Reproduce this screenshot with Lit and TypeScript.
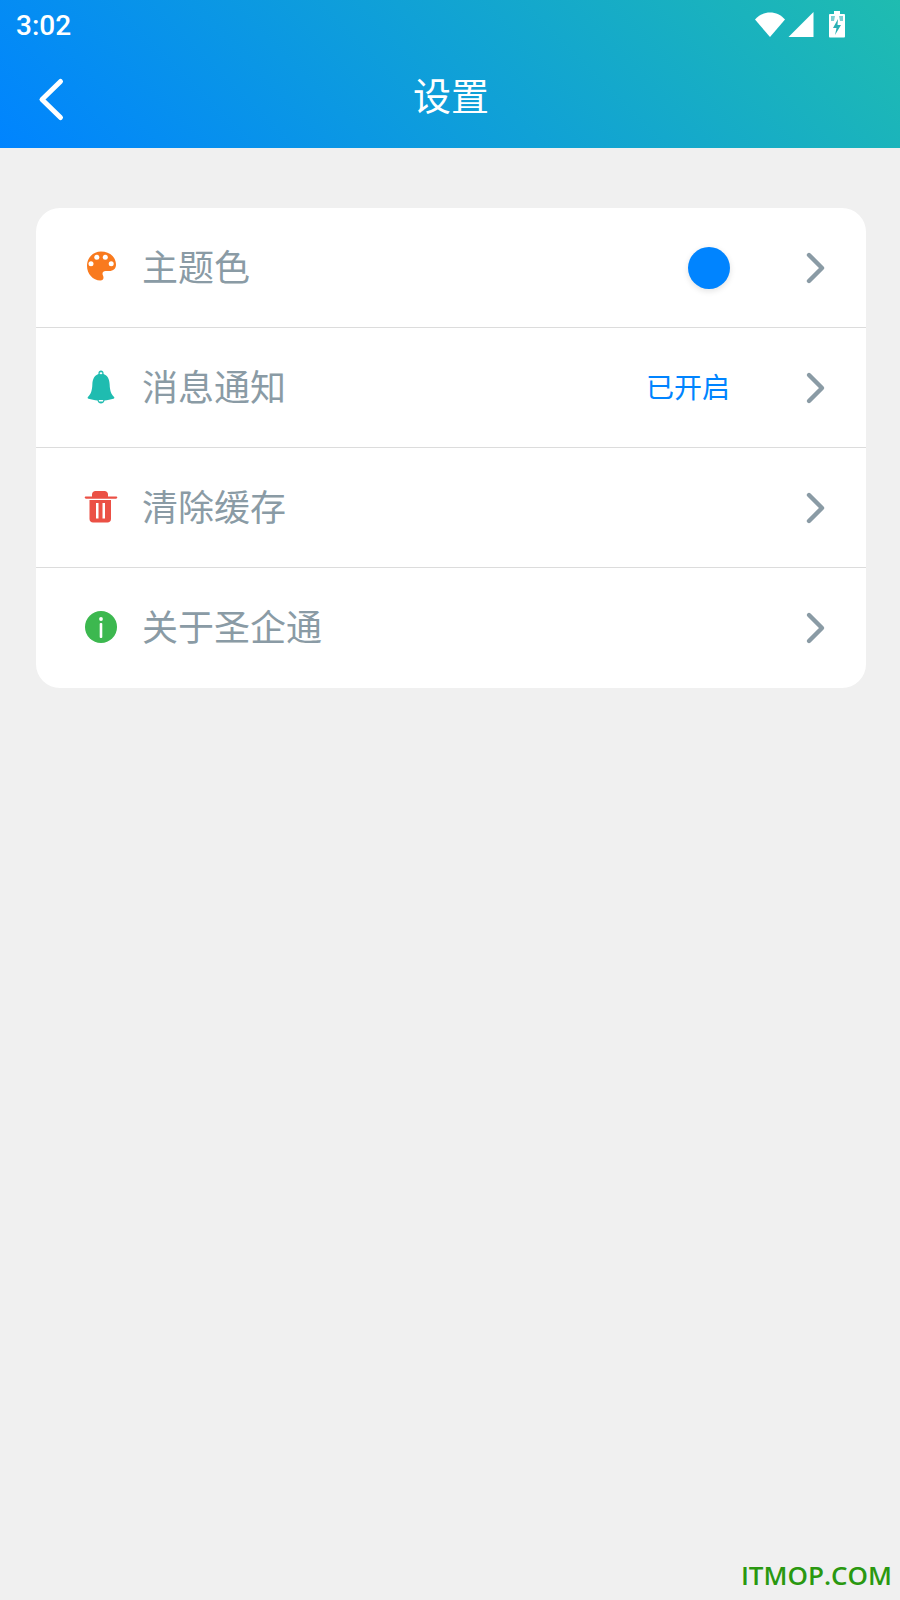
import { LitElement, css, html, svg } from 'lit';
import { customElement } from 'lit/decorators.js';

const chevron = html`<svg class="chevron" width="24" height="36" viewBox="0 0 24 36">
  <path d="M5 5 L18 18 L5 31" fill="none" stroke="#8a9ba5" stroke-width="4.4" stroke-linecap="round" stroke-linejoin="round" />
</svg>`;

const palette = svg`<path fill="#f97a1e" d="M20 4.500C12.200 4.500 6 10.800 6 18.800 6 26.800 11.800 33.500 19.400 33.500c2 0 3.100-1.200 3.100-2.800 0-1.800-1-2.400-1-3.900 0-1.700 1.300-2.700 3-2.700h3.600c4.300 0 6.900-2.500 6.900-6.300C35 10 28.600 4.500 20 4.500z"/>
  <g fill="#fff"><circle cx="10" cy="16.800" r="2.500"/><circle cx="15.800" cy="10.300" r="2.500"/><circle cx="24.300" cy="10.300" r="2.500"/><circle cx="30.200" cy="16.800" r="2.500"/></g>`;

const bell = svg`<g transform="translate(1.600 2) scale(.92 1)"><path fill="#1fbcb0" d="M20 1.500c-1.600 0-2.800 1.200-2.800 2.600v.8c-4.400 1.500-6.400 5.300-6.600 10.400-.2 6-1.400 9.600-4.800 12.600-.7.600-.3 1.600.7 1.800 3 .9 6.500 1.500 9.700 1.700.4 1.800 2 3 3.800 3s3.400-1.200 3.800-3c3.200-.2 6.700-.8 9.700-1.700 1-.2 1.400-1.200.7-1.800-3.400-3-4.600-6.600-4.800-12.600-.2-5.100-2.200-8.900-6.600-10.400v-.8c0-1.400-1.200-2.600-2.800-2.600z"/>
  <ellipse cx="20" cy="4.200" rx="1.500" ry="1" fill="#fff"/><rect x="17.500" y="31" width="5" height="1.500" rx=".75" fill="#fff"/></g>`;

const trash = svg`<path fill="#eb5045" d="M11 7.500c0-2 1.500-3.500 3.500-3.500h9c2 0 3.500 1.500 3.500 3.500v2h8c.7 0 1.300.5 1.300 1.100s-.6 1.100-1.300 1.100H5c-.7 0-1.300-.5-1.300-1.100s.6-1.100 1.300-1.100h6z"/>
  <path fill="#eb5045" d="M8.500 13h21.500v19c0 2-1.500 3.500-3.500 3.500H12c-2 0-3.500-1.500-3.500-3.500z"/>
  <rect x="15" y="16" width="2.500" height="15.500" fill="#fff"/><rect x="21.500" y="16" width="2.500" height="15.500" fill="#fff"/>`;

const info = svg`<circle cx="20" cy="20" r="16" fill="#3cb84f"/>
  <circle cx="20" cy="12" r="1.900" fill="#fff"/><rect x="18.700" y="16" width="2.600" height="15" rx="1" fill="#fff"/>`;

const rows = [
  { icon: palette, label: '主题色', kind: 'dot' },
  { icon: bell, label: '消息通知', kind: 'text', value: '已开启' },
  { icon: trash, label: '清除缓存', kind: '' },
  { icon: info, label: '关于圣企通', kind: '' },
];

@customElement('app-root')
export class AppRoot extends LitElement {
  static override styles = css`
    :host {
      display: block;
      position: relative;
      width: 900px;
      height: 1600px;
      background: #f0f0f0;
      overflow: hidden;
      font-family: 'Noto Sans CJK SC', Roboto, sans-serif;
    }

    .header {
      height: 148px;
      background: linear-gradient(45deg, #0084ff 0%, #1fbcb0 100%);
      color: #fff;
      display: flex;
      flex-direction: column;
    }

    .status {
      height: 50px;
      display: flex;
      align-items: center;
      justify-content: space-between;
      padding: 0 54px 0 16px;
    }

    .time {
      font-family: Roboto, sans-serif;
      font-size: 28px;
      font-weight: 500;
    }

    .status-icons {
      display: flex;
      align-items: center;
      gap: 2px;
      padding-bottom: 3px;
    }

    .bar {
      height: 98px;
      display: grid;
      grid-template-columns: 100px 1fr 100px;
      align-items: center;
    }

    .back {
      padding: 0 0 0 38px;
      display: flex;
    }

    .title {
      text-align: center;
      font-size: 38px;
      line-height: 48px;
      padding: 0 0 10px 2px;
      font-weight: 400;
    }

    .card {
      margin: 60px 34px 0 36px;
      background: #fff;
      border-radius: 24px;
      overflow: hidden;
    }

    .row {
      height: 120px;
      box-sizing: border-box;
      display: flex;
      align-items: center;
      padding: 0 38px 0 45px;
      border-bottom: 1px solid #dcdcdc;
    }

    .row:last-child {
      border-bottom: 0;
    }

    .icon {
      width: 40px;
      height: 40px;
      flex: none;
      margin: 0 21px 2px 0;
    }

    .label {
      flex: 1;
      font-size: 36px;
      line-height: 50px;
      padding-bottom: 6px;
      color: #8a9ba5;
    }

    .dot {
      width: 42px;
      height: 42px;
      border-radius: 50%;
      background: #0084ff;
      box-shadow: 0 2px 6px rgba(0, 0, 0, 0.12);
    }

    .value {
      font-size: 28px;
      line-height: 40px;
      padding-bottom: 4px;
      color: #0084ff;
    }

    .chevron {
      flex: none;
      margin-left: 74px;
    }

    .watermark {
      position: absolute;
      right: 8px;
      bottom: 7px;
      font-family: 'Open Sans', sans-serif;
      font-size: 26px;
      font-weight: 600;
      color: #2a9810;
    }
  `;

  override render() {
    return html`
      <div class="header">
        <div class="status">
          <span class="time">3:02</span>
          <span class="status-icons">
            <svg width="32" height="28" viewBox="0 0 32 28"><path fill="#fff" d="M1 9.500C5 5 10 2.500 16 2.500S27 5 31 9.500L16 27z"/></svg>
            <svg width="26" height="28" viewBox="0 0 26 28"><path fill="#fff" d="M25.500 2v25H.5z"/></svg>
            <svg style="margin-left:12px" width="18" height="28" viewBox="0 0 18 28">
              <path fill="#fff" d="M6 1h6v3h4c.5 0 1 .5 1 1v21.500c0 .5-.5 1-1 1H2c-.5 0-1-.5-1-1V5c0-.5.500-1 1-1h4z"/>
              <path fill="#2ab0b5" d="M10 9l-5 9h3.500L7 25l6-10H9.500z"/>
              <path fill="#2ab0b5" opacity=".6" d="M3 6h4l-1 5H3zM11 6h4v5h-3z"/>
            </svg>
          </span>
        </div>
        <div class="bar">
          <div class="back">
            <svg width="28" height="46" viewBox="0 0 28 46"><path d="M22.500 5.500 L4 23.500 L22.500 41.500" fill="none" stroke="#fff" stroke-width="5" stroke-linecap="round" stroke-linejoin="round"/></svg>
          </div>
          <div class="title">设置</div>
        </div>
      </div>
      <div class="card">
        ${rows.map(
          (r) => html`<div class="row">
            <svg class="icon" viewBox="0 0 40 40">${r.icon}</svg>
            <span class="label">${r.label}</span>
            ${r.kind === 'dot' ? html`<span class="dot"></span>` : ''}
            ${r.kind === 'text' ? html`<span class="value">${r.value}</span>` : ''}
            ${chevron}
          </div>`
        )}
      </div>
      <div class="watermark">ITMOP.COM</div>
    `;
  }
}
